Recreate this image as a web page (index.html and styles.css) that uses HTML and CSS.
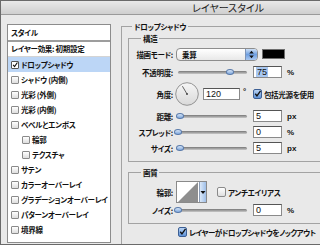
FILE: index.html
```html
<!DOCTYPE html>
<html lang="ja">
<head>
    <meta charset="UTF-8">
    <meta name="viewport" content="width=device-width, initial-scale=1.0">
    <title>レイヤースタイル</title>
    <link rel="stylesheet" href="styles.css">
</head>
<body>
    <div class="window">
        <div class="titlebar">レイヤースタイル</div>

        <div class="content">
            <!-- Style list -->
            <div class="styles-list">
                <div class="list-head">スタイル</div>
                <div class="preset">レイヤー効果: 初期設定</div>
                <ul class="effects">
                    <li class="selected"><span class="cb checked"><svg viewBox="0 0 8 8"><path d="M1.5 3.8 L3.4 6 L7.2 0.6" fill="none" stroke="#111" stroke-width="1.5"/></svg></span>ドロップシャドウ</li>
                    <li><span class="cb"></span>シャドウ (内側)</li>
                    <li><span class="cb"></span>光彩 (外側)</li>
                    <li><span class="cb"></span>光彩 (内側)</li>
                    <li><span class="cb"></span>ベベルとエンボス</li>
                    <li class="sub-item"><span class="cb"></span>輪郭</li>
                    <li class="sub-item"><span class="cb"></span>テクスチャ</li>
                    <li><span class="cb"></span>サテン</li>
                    <li><span class="cb"></span>カラーオーバーレイ</li>
                    <li><span class="cb"></span>グラデーションオーバーレイ</li>
                    <li><span class="cb"></span>パターンオーバーレイ</li>
                    <li><span class="cb"></span>境界線</li>
                </ul>
            </div>

            <!-- Settings -->
            <div class="settings">
                <fieldset class="group">
                    <legend>ドロップシャドウ</legend>

                    <fieldset class="sub structure">
                        <legend>構造</legend>

                        <div class="row">
                            <span class="label">描画モード:</span>
                            <div class="select">
                                <span>乗算</span>
                                <span class="stepper"><svg viewBox="0 0 12 12"><path d="M6 2 L8.5 5 L3.5 5 Z M6 10 L8.5 7 L3.5 7 Z" fill="#111"/></svg></span>
                            </div>
                            <span class="swatch"></span>
                        </div>

                        <div class="row opacity">
                            <span class="label">不透明度:</span>
                            <div class="slider"><span class="knob" style="--v: 0.75"></span></div>
                            <span class="num"><span class="sel">75</span></span>
                            <span class="unit">%</span>
                        </div>

                        <div class="row angle">
                            <span class="label">角度:</span>
                            <svg class="dial" viewBox="0 0 24 24">
                                <defs>
                                    <linearGradient id="dialFill" x1="0" y1="0" x2="0" y2="1">
                                        <stop offset="0" stop-color="#f6f6f6"/>
                                        <stop offset="1" stop-color="#d9d9d9"/>
                                    </linearGradient>
                                </defs>
                                <circle cx="12" cy="12" r="11.3" fill="url(#dialFill)" stroke="#8a8a8a" stroke-width="0.9"/>
                                <line x1="12" y1="12" x2="7.4" y2="4.2" stroke="#555" stroke-width="0.9"/>
                                <circle cx="12" cy="12" r="1" fill="#444"/>
                            </svg>
                            <span class="num wide">120</span>
                            <span class="deg">°</span>
                            <span class="cb aqua checked"><svg viewBox="0 0 9 9"><path d="M1.6 4.2 L3.8 7 L8.4 0.4" fill="none" stroke="#111" stroke-width="1.7"/></svg></span>
                            <span class="cb-label">包括光源を使用</span>
                        </div>

                        <div class="row distance">
                            <span class="label">距離:</span>
                            <div class="slider"><span class="knob" style="--v: 0.03"></span></div>
                            <span class="num">5</span>
                            <span class="unit">px</span>
                        </div>

                        <div class="row">
                            <span class="label">スプレッド:</span>
                            <div class="slider"><span class="knob" style="--v: 0"></span></div>
                            <span class="num">0</span>
                            <span class="unit">%</span>
                        </div>

                        <div class="row">
                            <span class="label">サイズ:</span>
                            <div class="slider"><span class="knob" style="--v: 0.03"></span></div>
                            <span class="num">5</span>
                            <span class="unit">px</span>
                        </div>
                    </fieldset>

                    <fieldset class="sub quality">
                        <legend>画質</legend>

                        <div class="row contour-row">
                            <span class="label">輪郭:</span>
                            <div class="contour">
                                <svg class="curve" viewBox="0 0 22 22"><path d="M0 22 L22 0 L22 22 Z" fill="#8e8e8e"/></svg>
                                <span class="drop"><svg viewBox="0 0 6 6"><path d="M0.5 2 L5.5 2 L3 5 Z" fill="#111"/></svg></span>
                            </div>
                            <span class="cb aqua antialias"></span>
                            <span class="cb-label">アンチエイリアス</span>
                        </div>

                        <div class="row noise">
                            <span class="label">ノイズ:</span>
                            <div class="slider"><span class="knob" style="--v: 0"></span></div>
                            <span class="num">0</span>
                            <span class="unit">%</span>
                        </div>
                    </fieldset>

                    <div class="knockout">
                        <span class="cb aqua checked"><svg viewBox="0 0 9 9"><path d="M1.6 4.2 L3.8 7 L8.4 0.4" fill="none" stroke="#111" stroke-width="1.7"/></svg></span>
                        <span class="cb-label">レイヤーがドロップシャドウをノックアウト</span>
                    </div>
                </fieldset>
            </div>
        </div>
    </div>
</body>
</html>
```

FILE: styles.css
```css
* {
    box-sizing: border-box;
    margin: 0;
    padding: 0;
}

body {
    font-family: "Noto Sans CJK JP", sans-serif;
    font-size: 7.5px;
    font-weight: bold;
    letter-spacing: -0.3px;
    font-feature-settings: "palt";
    color: #111;
    background: #e9e9e9;
    overflow: hidden;
}

.window {
    width: 456px;
    height: 245px;
    border: 1px solid #6a6a6a;
    background: #e9e9e9;
    overflow: hidden;
}

.titlebar {
    height: 14px;
    line-height: 13px;
    text-align: center;
    font-size: 10px;
    font-weight: normal;
    letter-spacing: 0;
    color: #1a1a1a;
    background: linear-gradient(#e9e9e9, #cfcfcf);
    border-bottom: 1px solid #9a9a9a;
}

.content {
    display: flex;
    align-items: flex-start;
    gap: 10px;
    padding: 9px 0 0 6px;
}

/* left list */
.styles-list {
    width: 104px;
    height: 219px;
    flex-shrink: 0;
    background: #fff;
    border: 1px solid #8c8c8c;
}

.list-head {
    height: 17px;
    line-height: 15px;
    padding-left: 3px;
    border-bottom: 2px solid #9d9d9d;
}

.preset {
    height: 15px;
    line-height: 14px;
    padding-left: 3px;
    border-bottom: 1px solid #d4d4d4;
}

.effects {
    list-style: none;
}

.effects li {
    height: 15px;
    display: flex;
    align-items: center;
    gap: 2px;
    padding-left: 3px;
    white-space: nowrap;
}

.effects li.selected {
    background: #bcd6f6;
}

.effects li.sub-item {
    padding-left: 14px;
}

.cb {
    width: 8px;
    height: 8px;
    flex-shrink: 0;
    display: inline-flex;
    border: 1px solid #8a8a8a;
    border-radius: 1px;
    background: linear-gradient(#fff, #dedede);
}

.cb svg {
    width: 100%;
    height: 100%;
    overflow: visible;
}

.cb.checked {
    border-color: #555;
    background: #fff;
}

.cb.aqua {
    width: 9px;
    height: 10px;
    border-radius: 2px;
}

.cb.aqua.checked {
    border-color: #3c5f94;
    background: linear-gradient(#b7d2f3, #5f93d8);
}

.cb-label {
    margin-left: 2px;
    white-space: nowrap;
}

/* right settings */
.settings {
    width: 330px;
    margin-top: -3px;
    flex-shrink: 0;
}

fieldset {
    border: 1px solid #a3a3a3;
    min-inline-size: 0;
}

legend {
    padding: 0 2px;
    line-height: 11px;
}

.group {
    padding: 1px 0 30px 6px;
}

.group > legend {
    margin-left: 4px;
}

.sub {
    padding: 3px 0 6px 0;
}

.sub legend {
    margin-left: 12px;
}

.quality {
    margin-top: 5px;
}

.row {
    display: flex;
    align-items: center;
    height: 14px;
    margin-top: 2px;
}

.row:first-of-type {
    margin-top: 0;
}

.row.opacity {
    margin-top: 4px;
}

.row.angle {
    height: 24px;
    margin-top: 3px;
}

.row.distance {
    margin-top: 3px;
}

.row.contour-row {
    height: 22px;
}

.row.noise {
    margin-top: 0;
}

.label {
    width: 44px;
    margin-right: 3px;
    text-align: right;
    white-space: nowrap;
}

.select {
    width: 82px;
    height: 13px;
    display: flex;
    align-items: center;
    justify-content: space-between;
    padding-left: 5px;
    border: 1px solid #8d8d8d;
    border-radius: 4px;
    background: linear-gradient(#fff, #e8e8e8);
    overflow: hidden;
}

.stepper {
    width: 12px;
    height: 100%;
    display: flex;
    background: linear-gradient(#cfe1f7, #6f9fe0 50%, #a9c8f0);
    border-left: 1px solid #7c94b8;
}

.stepper svg {
    width: 100%;
    height: 100%;
}

.swatch {
    width: 23px;
    height: 10px;
    margin-left: 4px;
    background: #000;
    border: 1px solid #6d6d6d;
}

.slider {
    position: relative;
    width: 74px;
    height: 14px;
}

.slider::before {
    content: "";
    position: absolute;
    left: 2px;
    right: 3px;
    top: 6px;
    height: 3px;
    border-radius: 2px;
    background: linear-gradient(#777, #c9c9c9);
}

.knob {
    position: absolute;
    top: 4px;
    left: calc(var(--v) * 69px - 2px);
    width: 8px;
    height: 6px;
    border-radius: 50% 50% 45% 45%;
    border: 1px solid #5a7bab;
    background: linear-gradient(#d9e7f8, #7fa7dc);
}

.num {
    width: 29px;
    height: 12px;
    margin-left: 3px;
    padding-left: 2px;
    font-family: "Liberation Sans", sans-serif;
    font-weight: normal;
    font-size: 9px;
    letter-spacing: 0;
    line-height: 10px;
    background: #fff;
    border: 1px solid #8a8a8a;
    border-top-color: #555;
}

.num .sel {
    background: #a9c8f1;
    padding: 0 1px;
}

.num.wide {
    width: 37px;
    margin-left: 4px;
}

.unit {
    margin-left: 5px;
    font-family: "Liberation Sans", sans-serif;
    font-size: 8px;
    letter-spacing: 0;
}

.dial {
    width: 24px;
    height: 24px;
    margin-left: -1px;
}

.deg {
    align-self: flex-start;
    margin: 5px 0 0 3px;
    font-family: "Liberation Sans", sans-serif;
    font-size: 8px;
}

.angle .cb {
    margin-left: 7px;
}

.contour {
    display: flex;
    height: 22px;
    border: 1px solid #8a8a8a;
}

.curve {
    width: 22px;
    height: 20px;
    background: #fff;
}

.drop {
    width: 7px;
    display: flex;
    align-items: center;
    background: linear-gradient(90deg, #dbe8f8, #9fbfe8);
    border-left: 1px solid #8a9bb5;
}

.drop svg {
    width: 6px;
    height: 6px;
}

.antialias {
    margin-left: 10px;
}

.knockout {
    display: flex;
    align-items: center;
    height: 12px;
    margin-top: 2px;
    padding-left: 50px;
}

.knockout .cb-label {
    letter-spacing: -0.5px;
}
```
